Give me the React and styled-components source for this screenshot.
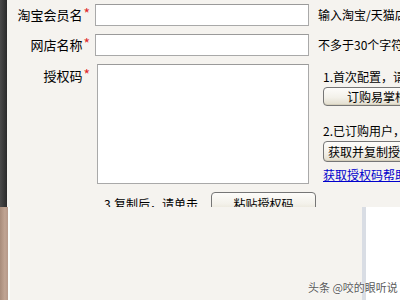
import React from 'react';
import styled, { createGlobalStyle } from 'styled-components';

const GlobalStyle = createGlobalStyle`
  html, body {
    margin: 0;
    padding: 0;
  }
  body {
    width: 400px;
    height: 300px;
    overflow: hidden;
    background: #f5f3ef;
    font-family: "Noto Sans CJK SC", "Noto Sans", sans-serif;
    color: #000;
  }
`;

const Screen = styled.div`
  width: 400px;
  height: 300px;
  display: flex;
  flex-direction: column;
  overflow: hidden;
  background: #f5f3ef;
  position: relative;
`;

const Window = styled.div`
  height: 207px;
  flex-shrink: 0;
  display: flex;
  overflow: hidden;
`;

const DarkEdge = styled.div`
  width: 7px;
  flex-shrink: 0;
  background: linear-gradient(to right, #4a4a4a, #343434 70%, #2a2a2a);
`;

const Form = styled.div`
  display: grid;
  grid-template-columns: 83px 214px max-content;
  grid-template-rows: 22px 22px 120px auto;
  column-gap: 5px;
  row-gap: 8px;
  padding-top: 4px;
  white-space: nowrap;
`;

const Label = styled.div`
  font-size: 13px;
  line-height: 22px;
  text-align: right;
  padding-top: ${p => (p.$top ? '1px' : '0')};
  align-self: start;
`;

const Star = styled.span`
  color: #e02828;
  font-size: 14px;
  vertical-align: top;
  line-height: 18px;
  margin-left: 1px;
`;

const Input = styled.div`
  box-sizing: border-box;
  height: 22px;
  background: #fff;
  border: 1px solid #a9a9a9;
  border-top-color: #9a9a9a;
`;

const TextArea = styled(Input)`
  height: 120px;
  margin-left: 2px;
`;

const Hint = styled.div`
  font-size: 12px;
  line-height: 22px;
  padding-left: 4px;
`;

const Side = styled.div`
  display: flex;
  flex-direction: column;
  align-items: flex-start;
  padding-left: 9px;
  font-size: 12px;
`;

const Step = styled.div`
  line-height: 18px;
  margin-top: ${p => p.$mt}px;
`;

const Button = styled.div`
  box-sizing: border-box;
  height: ${p => p.$h || 21}px;
  width: ${p => p.$w}px;
  margin-top: ${p => p.$mt || 0}px;
  padding-left: ${p => p.$pl || 0}px;
  display: flex;
  align-items: center;
  justify-content: ${p => (p.$center ? 'center' : 'flex-start')};
  font-size: 12px;
  border: 1px solid #767676;
  border-radius: 4px;
  background: linear-gradient(#fdfcfa, #f3f1ea 55%, #e2ddcd);
  box-shadow: inset 0 -1px 0 #d6d0bd;
`;

const HelpLink = styled.a`
  margin-top: 4px;
  line-height: 18px;
  color: #0000cc;
  text-decoration: underline;
  font-size: 12px;
`;

const PasteRow = styled.div`
  grid-column: 2 / 4;
  display: flex;
  align-items: center;
  padding-left: 9px;
  gap: 13px;
  font-size: 12px;
`;

const Lower = styled.div`
  flex: 1;
  display: flex;
`;

const TanEdge = styled.div`
  width: 8px;
  flex-shrink: 0;
  background: linear-gradient(to right, #a88c7b, #c0a493 60%, #b5998a);
  border-right: 2px solid #fbfdfb;
`;

const Desk = styled.div`
  flex: 1;
  background: #f5f3ef;
`;

const SidePanel = styled.div`
  width: 34px;
  background: #fff;
  border-left: 4px solid #d9dde4;
`;

const Watermark = styled.div`
  position: absolute;
  left: 308px;
  top: 279px;
  font-size: 11px;
  line-height: 16px;
  color: #5a5a5a;
  white-space: nowrap;
  text-shadow: 0 0 2px #fff, 0 0 1px #fff;
`;

export default function App() {
  return (
    <Screen>
      <GlobalStyle />
      <Window>
        <DarkEdge />
        <Form>
          <Label>淘宝会员名<Star>*</Star></Label>
          <Input />
          <Hint>输入淘宝/天猫店铺的会员名</Hint>

          <Label>网店名称<Star>*</Star></Label>
          <Input />
          <Hint>不多于30个字符</Hint>

          <Label $top>授权码<Star>*</Star></Label>
          <TextArea />
          <Side>
            <Step $mt={4}>1.首次配置，请先订购易掌柜服务</Step>
            <Button $mt={1} $h={20} $w={140} $pl={23}>订购易掌柜服务</Button>
            <Step $mt={16}>2.已订购用户，请点击下方按钮</Step>
            <Button $mt={1} $h={22} $w={130} $pl={4}>获取并复制授权码</Button>
            <HelpLink>获取授权码帮助</HelpLink>
          </Side>

          <div />
          <PasteRow>
            3.复制后，请单击
            <Button $h={22} $w={105} $center>粘贴授权码</Button>
          </PasteRow>
        </Form>
      </Window>
      <Lower>
        <TanEdge />
        <Desk />
        <SidePanel />
      </Lower>
      <Watermark>头条 @咬的眼听说</Watermark>
    </Screen>
  );
}
